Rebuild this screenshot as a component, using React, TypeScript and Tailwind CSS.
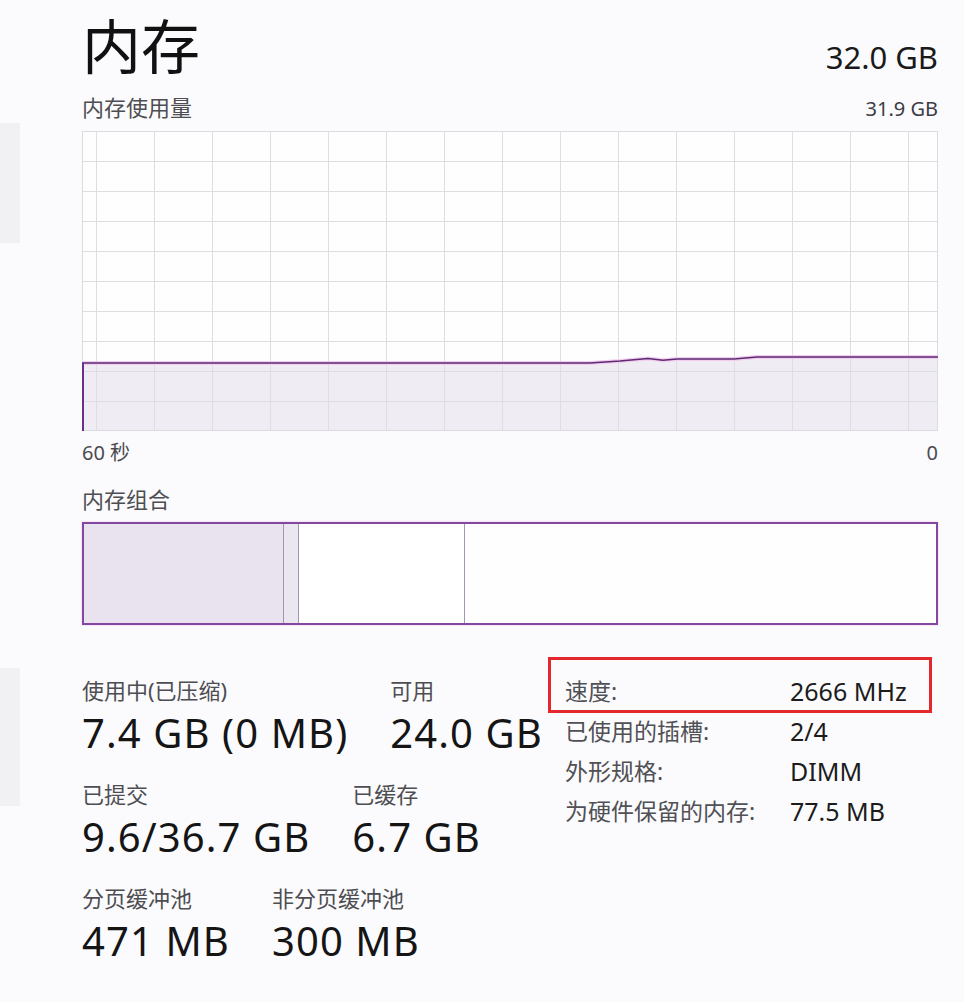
import React from 'react';

const GRID_X = Array.from({ length: 15 }, (_, i) => 14 + 58 * i);
const GRID_Y = Array.from({ length: 9 }, (_, i) => 30 * (i + 1));

const USAGE: [number, number][] = [
    [0, 232],
    [508, 232],
    [538, 230],
    [566, 227.5],
    [581, 229.3],
    [595, 228],
    [652, 228],
    [675, 226],
    [856, 226],
];

const DETAILS = [
    ['速度:', '2666 MHz'],
    ['已使用的插槽:', '2/4'],
    ['外形规格:', 'DIMM'],
    ['为硬件保留的内存:', '77.5 MB'],
];

function UsageChart() {
    const line = USAGE.map(([x, y]) => `${x},${y}`).join(' ');
    const area = `${line} 856,300 0,300`;

    return (
        <svg width="856" height="300" viewBox="0 0 856 300" className="block bg-[#fefefe]">
            <polygon points={area} fill="#efedf3" />
            {GRID_X.map((x) => (
                <line key={x} x1={x + 0.5} y1="0" x2={x + 0.5} y2="300" stroke="#dedde2" strokeWidth="1" />
            ))}
            {GRID_Y.map((y) => (
                <line key={y} x1="0" y1={y + 0.5} x2="856" y2={y + 0.5} stroke="#dedde2" strokeWidth="1" />
            ))}
            <rect x="0.5" y="0.5" width="855" height="299" fill="none" stroke="#dcdbe0" strokeWidth="1" />
            <polyline points={line} fill="none" stroke="#f3cdf0" strokeWidth="4" />
            <polyline points={line} fill="none" stroke="#5b2a72" strokeWidth="1.6" />
            <line x1="1" y1="232" x2="1" y2="300" stroke="#6b2f8a" strokeWidth="2" />
        </svg>
    );
}

function Stat({ label, value }: { label: string; value: string }) {
    return (
        <div>
            <div className="text-[22px] leading-[30px] text-[#4e4e52]">{label}</div>
            <div className="mt-[4px] text-[40px] leading-[48px] tracking-[1.1px] text-[#151515] whitespace-nowrap">
                {value}
            </div>
        </div>
    );
}

export default function App() {
    return (
        <div className="min-h-screen bg-[#fbfbfd] flex font-['Noto_Sans','Noto_Sans_CJK_SC',sans-serif]">
            {/* sidebar fragments at the left edge */}
            <aside className="w-[20px] shrink-0">
                <div className="mt-[123px] h-[120px] bg-[#f1f1f4]" />
                <div className="mt-[425px] h-[138px] bg-[#f1f1f4]" />
            </aside>

            <main className="pl-[62px] w-[918px] shrink-0">
                <div className="flex justify-between items-baseline mt-[14px]">
                    <h1 className="text-[59px] leading-none text-[#111] font-['Noto_Sans_CJK_SC',sans-serif]">内存</h1>
                    <span className="text-[31px] leading-none text-[#1a1a1a]">32.0 GB</span>
                </div>

                <div className="mt-[19px] h-[30px] flex justify-between items-baseline text-[22px] leading-[30px] text-[#4e4e52]">
                    <span>内存使用量</span>
                    <span className="text-[20px] text-[#3c3c44]">31.9 GB</span>
                </div>

                <div className="mt-[9px]">
                    <UsageChart />
                </div>

                <div className="mt-[7px] h-[30px] flex justify-between text-[20px] leading-[30px] text-[#4a4a4e]">
                    <span>60 秒</span>
                    <span>0</span>
                </div>

                <div className="mt-[16px] h-[30px] text-[22px] leading-[30px] text-[#4e4e52]">内存组合</div>

                <div className="mt-[8px] h-[103px] border-2 border-[#84479f] flex shadow-[0_0_2px_#f0c0ee]">
                    <div className="w-[200px] bg-[#e8e3ef] border-r border-[#a594b4]" />
                    <div className="w-[15px] bg-[#ebe7f1] border-r border-[#a594b4]" />
                    <div className="w-[166px] bg-white border-r border-[#a594b4]" />
                    <div className="flex-1 bg-[#fefefe]" />
                </div>

                <div className="mt-[46px] flex gap-[27px]">
                    <div className="w-[456px] shrink-0 mt-[4px] flex flex-col gap-[22px]">
                        <div className="flex gap-[42px]">
                            <Stat label="使用中(已压缩)" value="7.4 GB (0 MB)" />
                            <Stat label="可用" value="24.0 GB" />
                        </div>
                        <div className="flex gap-[42px]">
                            <Stat label="已提交" value="9.6/36.7 GB" />
                            <Stat label="已缓存" value="6.7 GB" />
                        </div>
                        <div className="flex gap-[42px]">
                            <Stat label="分页缓冲池" value="471 MB" />
                            <Stat label="非分页缓冲池" value="300 MB" />
                        </div>
                    </div>

                    <div className="relative">
                        {/* red highlight drawn over the speed row */}
                        <div className="absolute -left-[17px] -top-[14px] w-[384px] h-[56px] border-[3px] border-[#e3282d] pointer-events-none" />
                        <div className="grid grid-cols-[225px_auto] leading-[40px]">
                            {DETAILS.map(([k, v]) => (
                                <React.Fragment key={k}>
                                    <span className="text-[23px] text-[#505055]">{k}</span>
                                    <span className="text-[25px] text-[#1c1c1c] whitespace-nowrap">{v}</span>
                                </React.Fragment>
                            ))}
                        </div>
                    </div>
                </div>
            </main>
        </div>
    );
}
